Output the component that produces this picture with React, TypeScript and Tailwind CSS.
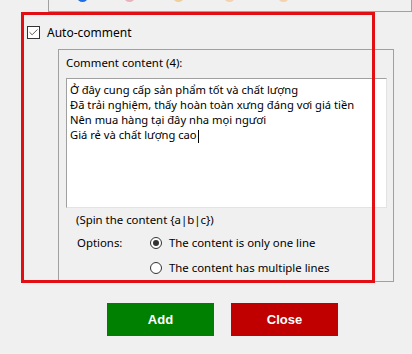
import { Check } from 'lucide-react';

const lines = [
  'Ở đây cung cấp sản phẩm tốt và chất lượng',
  'Đã trải nghiệm, thấy hoàn toàn xưng đáng vơi giá tiền',
  'Nên mua hàng tại đây nha mọi ngươi',
  'Giá rẻ và chất lượng cao',
];

function Radio({ checked, label }: { checked?: boolean; label: string }) {
  return (
    <div className="flex items-center h-[16px]">
      <span className="flex h-[12px] w-[12px] items-center justify-center rounded-full border border-[#333] bg-white">
        {checked && <span className="h-[6px] w-[6px] rounded-full bg-[#333]" />}
      </span>
      <span className="ml-[7px]">{label}</span>
    </div>
  );
}

export default function App() {
  return (
    <div
      className="relative h-[354px] w-[412px] overflow-hidden bg-[#f0f0f0] text-[11.4px] leading-[16px] text-black"
      style={{ fontFamily: '"Noto Sans", "Open Sans", sans-serif' }}
    >
      {/* bottom edge of the panel above */}
      <div className="ml-[48px] flex h-[12px] w-[364px] overflow-hidden border-x border-b border-[#a0a0a0]">
        <div className="-mt-[9px] flex">
          <span className="ml-[28px] h-[11px] w-[11px] rounded-full bg-[#1e6ee6]" />
          <span className="ml-[36px] h-[11px] w-[11px] rounded-full bg-[#e8b4bc]" />
          <span className="ml-[38px] h-[11px] w-[11px] rounded-full bg-[#efcf9a]" />
          <span className="ml-[40px] h-[11px] w-[11px] rounded-full bg-[#f3d2b0]" />
          <span className="ml-[43px] h-[11px] w-[11px] rounded-full bg-[#f3d2b0]" />
        </div>
      </div>

      <div className="ml-[27px] mt-[14px] flex h-[13px] items-center">
        <span className="flex h-[13px] w-[13px] items-center justify-center border border-[#333] bg-white">
          <Check className="h-[11px] w-[11px] text-[#222]" strokeWidth={1.6} />
        </span>
        <span className="ml-[7px] text-[12px]">Auto-comment</span>
      </div>

      <div className="ml-[58px] mt-[10px] h-[233px] w-[336px] border border-[#a0a0a0] pl-[7px] pt-[5px]">
        <div>Comment content (4):</div>
        <div className="mt-[7px] h-[130px] w-[321px] overflow-hidden border border-t-[#a0a0a0] border-l-[#a0a0a0] border-r-[#e3e3e3] border-b-[#e3e3e3] bg-white pl-[3px] pt-[3px] text-[11.2px] leading-[15px]">
          {lines.map((l, i) => (
            <div key={i} className="whitespace-nowrap">
              {l}
              {i === lines.length - 1 && <span className="ml-[1px] inline-block h-[13px] w-px bg-black align-middle" />}
            </div>
          ))}
        </div>
        <div className="ml-[10px] mt-[4px]">(Spin the content {'{a|b|c}'})</div>
        <div className="ml-[11px] mt-[7px] flex">
          <div className="w-[73px]">Options:</div>
          <div className="flex flex-col gap-[9px]">
            <Radio checked label="The content is only one line" />
            <Radio label="The content has multiple lines" />
          </div>
        </div>
      </div>

      <div
        className="ml-[107px] mt-[21px] flex gap-[17px] text-[13px] font-bold text-white"
        style={{ fontFamily: '"Liberation Sans", Arial, sans-serif' }}
      >
        <button className="flex h-[33px] w-[107px] items-center justify-center bg-[#008000]">Add</button>
        <button className="flex h-[33px] w-[107px] items-center justify-center bg-[#c00000]">Close</button>
      </div>

      {/* red annotation frame */}
      <div className="absolute left-[21px] top-[12px] h-[271px] w-[354px] border-[3px] border-[#e10f14]" />
    </div>
  );
}
